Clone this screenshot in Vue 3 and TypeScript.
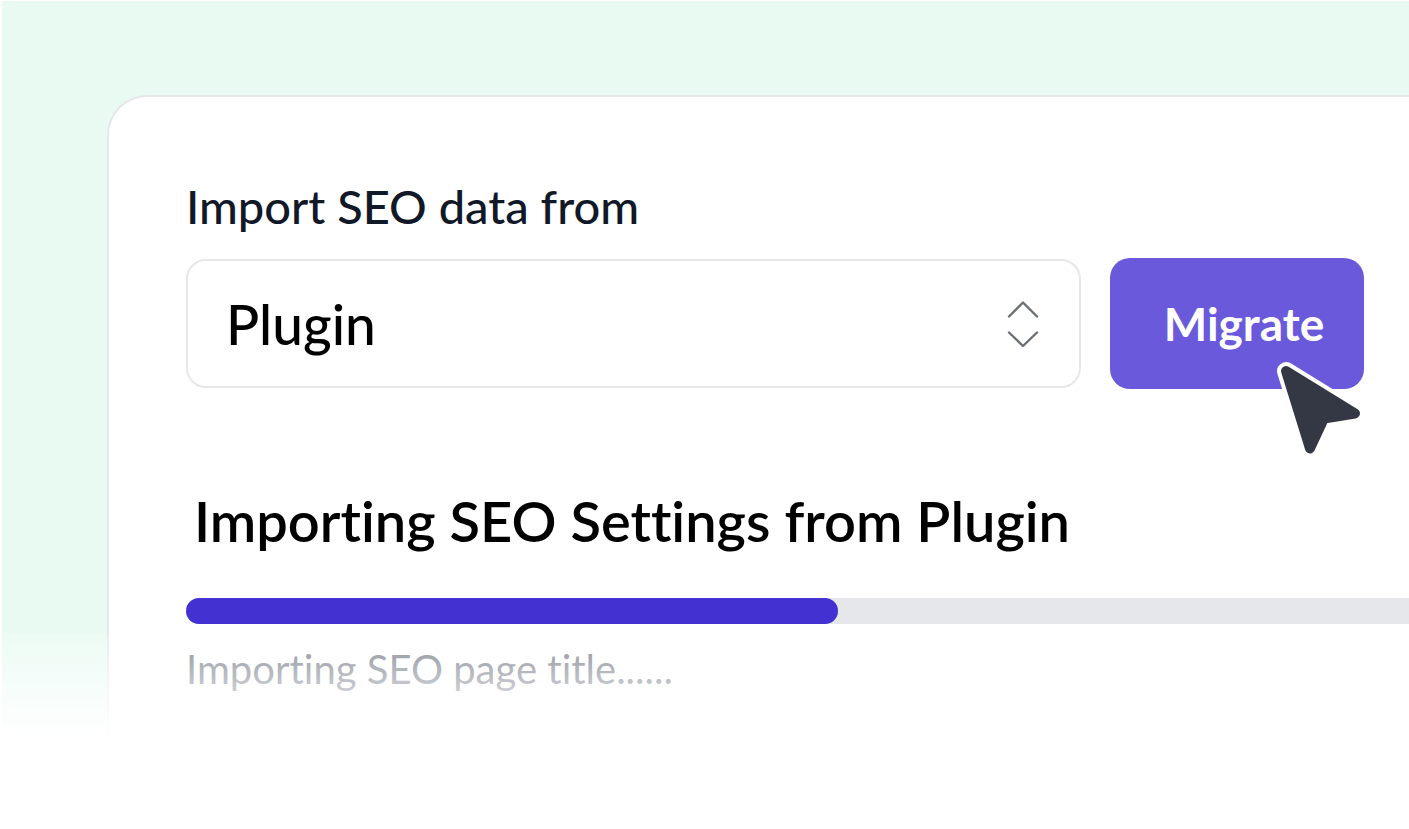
<script setup lang="ts">
import { ref } from 'vue'

const sources = ['Plugin']
const source = ref<string>('Plugin')
const progress = ref<number>(53.3)
</script>

<template>
  <main class="scene">
    <section class="card">
      <form class="form" @submit.prevent>
        <label class="label" for="source">Import SEO data from</label>
        <div class="row">
          <div class="picker">
            <select id="source" v-model="source" class="select">
              <option v-for="item in sources" :key="item" :value="item">{{ item }}</option>
            </select>
            <svg class="chevrons" viewBox="0 0 32 48" aria-hidden="true">
              <path d="M2 16.500 16 2.500 30 16.500M2 32.500 16 46 30 32.500" />
            </svg>
          </div>
          <div class="action">
            <button class="button" type="submit">Migrate</button>
            <svg class="cursor" viewBox="0 0 96 106" aria-hidden="true">
              <path class="halo" d="M16 16 85 58.500 54 63.500 40 93.500Z" />
              <path class="arrow" d="M16 16 85 58.500 54 63.500 40 93.500Z" />
            </svg>
          </div>
        </div>
      </form>
      <h1 id="status" class="title">Importing SEO Settings from Plugin</h1>
      <div
        class="track"
        role="progressbar"
        aria-labelledby="status"
        aria-valuemin="0"
        aria-valuemax="100"
        :aria-valuenow="progress"
      >
        <div class="fill" :style="{ width: progress + '%' }"></div>
      </div>
      <p class="note">Importing SEO page title......</p>
    </section>
  </main>
</template>

<style>
body {
  margin: 0;
  background: #ffffff;
}
</style>

<style scoped>
.scene {
  box-sizing: border-box;
  position: relative;
  display: flex;
  min-height: 100vh;
  padding: 94px 0 0 105px;
  border-top: 1px solid #ffffff;
  border-left: 2px solid #ffffff;
  background: #e8faf2;
  font-family: Lato, "Liberation Sans", sans-serif;
  font-variant-ligatures: none;
  overflow: hidden;
}

.scene::after {
  content: "";
  position: absolute;
  right: 0;
  bottom: 0;
  left: 0;
  height: 196px;
  background: linear-gradient(rgba(255, 255, 255, 0.2), #ffffff 104px);
  pointer-events: none;
}

.card {
  flex: 1;
  min-width: 0;
  box-sizing: border-box;
  padding: 79px 0 0 77px;
  border: 2px solid #e5e7eb;
  border-right: 0;
  border-top-left-radius: 40px;
  background: #ffffff;
}

.label {
  display: block;
  margin-bottom: 22px;
  color: #111827;
  font-size: 47px;
  font-weight: 500;
  line-height: 60px;
}

.row {
  display: flex;
  align-items: center;
  gap: 29px;
  padding-right: 45px;
}

.picker {
  position: relative;
  display: flex;
  flex: 1;
  min-width: 0;
}

.select {
  appearance: none;
  box-sizing: border-box;
  width: 100%;
  height: 129px;
  margin: 0;
  padding: 0 96px 0 38px;
  border: 2px solid #e5e7eb;
  border-radius: 20px;
  background: #ffffff;
  color: #000000;
  font-family: inherit;
  font-size: 55px;
  font-weight: 500;
}

.chevrons {
  position: absolute;
  top: 41px;
  right: 42px;
  width: 32px;
  height: 48px;
  fill: none;
  stroke: #6b7078;
  stroke-width: 2.4;
  stroke-linecap: round;
  stroke-linejoin: round;
  pointer-events: none;
}

.action {
  position: relative;
  display: flex;
}

.button {
  box-sizing: border-box;
  width: 254px;
  height: 131px;
  margin: 0;
  padding: 0 0 0 14px;
  border: 0;
  border-radius: 20px;
  background: #6a5adb;
  color: #ffffff;
  font-family: inherit;
  font-size: 46px;
  font-weight: 700;
}

.cursor {
  position: absolute;
  top: 97px;
  right: -2px;
  width: 96px;
  height: 106px;
  stroke-linejoin: round;
  pointer-events: none;
}

.halo {
  fill: #ffffff;
  stroke: #ffffff;
  stroke-width: 18;
}

.arrow {
  fill: #343844;
  stroke: #343844;
  stroke-width: 10;
}

.title {
  margin: 97px 0 42px 8px;
  color: #000000;
  font-size: 56px;
  font-weight: 600;
  line-height: 70px;
}

.track {
  height: 26px;
  border-radius: 13px 0 0 13px;
  background: #e5e7eb;
}

.fill {
  height: 100%;
  border-radius: 13px;
  background: #4331d1;
}

.note {
  margin: 19px 0 0;
  color: #6b7280;
  font-size: 40px;
  line-height: 52px;
}
</style>
